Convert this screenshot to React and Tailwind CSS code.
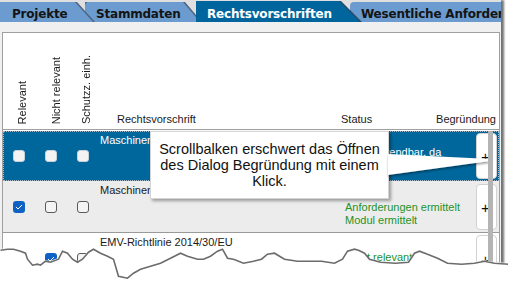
import React from "react";

function Cb({ checked, sel }) {
  if (checked)
    return (
      <div className="flex h-[12px] w-[12px] items-center justify-center rounded-[3px] bg-[#0f62c4]">
        <svg width="8" height="6" viewBox="0 0 8 6">
          <path d="M1 3 L3 5 L7 1" fill="none" stroke="white" strokeWidth="1" />
        </svg>
      </div>
    );
  if (sel)
    return <div className="h-[12px] w-[12px] rounded-[3px] border border-[#c9d2da] bg-[#f3f3f3]" />;
  return <div className="h-[12px] w-[12px] rounded-[3px] border border-[#5a5a5a] bg-[#f4f4f4]" />;
}

function CbCol({ checked, sel }) {
  return (
    <div className="flex w-[32px] shrink-0 items-center pl-[10px]">
      <Cb checked={checked} sel={sel} />
    </div>
  );
}

function PlusBtn({ mt }) {
  return (
    <div
      className={
        "mb-[2px] flex w-[21px] shrink-0 items-center justify-center rounded-[4px] border border-[#d2d2d2] bg-white pr-[2px] text-[15px] text-[#111] " +
        mt
      }
    >
      +
    </div>
  );
}

const tornPts =
  "0,249 7,248 13,248 20,250 25,252 27,258 32,264 37,263 40,264 45,260 50,261 58,258 62,250 67,252 72,258 77,261 82,258 88,251 93,248 100,252 107,255 113,258 118,275 127,277 133,272 140,268 150,265 160,262 170,257 180,252 187,255 197,258 203,258 210,255 217,250 222,248 227,257 233,258 243,262 253,260 261,258 267,253 274,252 284,258 297,260 321,260 334,262 342,258 347,250 354,248 358,249 364,252 369,258 380,261 395,262 408,261 414,252 419,250 427,253 437,257 447,262 461,263 474,262 484,260 494,262 508,263";

export default function App() {
  return (
    <div className="relative h-[291px] w-[508px] overflow-hidden bg-white font-['Liberation_Sans',Arial,sans-serif] text-[11px] text-[#1a1a1a]">
      <div className="relative h-[291px] w-[501px] bg-[#f0f0f0] shadow-[3px_0_2px_rgba(0,0,0,0.55)]">
        {/* Tabs */}
        <div className="flex h-[22px] bg-[#dfdfdf] pt-[2px] font-['DejaVu_Sans',Verdana,sans-serif] text-[12px] font-bold tracking-[-0.2px] whitespace-nowrap">
          <div className="relative z-30 h-[20px] w-[95px] shrink-0 bg-[#4d6580] [clip-path:polygon(0_0,77px_0,95px_100%,0_100%)]">
            <div className="h-[20px] bg-[#6b9bcf] pl-[12px] leading-[24px] text-[#141414] [clip-path:polygon(0_0,75px_0,93px_100%,0_100%)]">
              Projekte
            </div>
          </div>
          <div className="relative z-20 ml-[-10px] h-[20px] w-[117px] shrink-0 bg-[#4d6580] [clip-path:polygon(0_0,100px_0,117px_100%,0_100%)]">
            <div className="h-[20px] rounded-tl-[4px] bg-[#6b9bcf] pl-[11px] leading-[24px] text-[#141414] [clip-path:polygon(0_0,98px_0,115px_100%,0_100%)]">
              Stammdaten
            </div>
          </div>
          <div className="relative z-40 ml-[-6px] mt-[-1px] h-[21px] w-[166px] shrink-0 bg-[#2d4a66] [clip-path:polygon(0_0,145px_0,166px_100%,0_100%)]">
            <div className="h-[21px] bg-[#00659d] pl-[11px] leading-[26px] text-white [clip-path:polygon(0_0,143px_0,164px_100%,0_100%)]">
              Rechtsvorschriften
            </div>
          </div>
          <div className="relative z-10 ml-[-12px] h-[20px] min-w-0 flex-1 overflow-hidden rounded-tl-[4px] bg-[#6b9bcf] pl-[11px] leading-[24px] text-[#141414]">
            Wesentliche Anforder
          </div>
        </div>
        <div className="h-[10px] bg-[#f0f0f0]" />

        {/* Panel */}
        <div className="ml-[2px] mr-[1px] h-[259px] border-l border-r border-t border-[#a0a0a0] bg-white">
          {/* Header */}
          <div className="flex h-[97px] items-end border-b border-[#a0a0a0] leading-[13px]">
            <div className="w-[32px] shrink-0 pb-[5px] pl-[13px]">
              <div className="rotate-180 whitespace-nowrap leading-[13px] [writing-mode:vertical-rl]">Relevant</div>
            </div>
            <div className="w-[32px] shrink-0 pb-[5px] pl-[15px]">
              <div className="rotate-180 whitespace-nowrap leading-[13px] [writing-mode:vertical-rl]">Nicht relevant</div>
            </div>
            <div className="w-[32px] shrink-0 pb-[5px] pl-[13px]">
              <div className="rotate-180 whitespace-nowrap leading-[13px] [writing-mode:vertical-rl]">Schutzz. einh.</div>
            </div>
            <div className="w-[242px] shrink-0 pb-[3px] pl-[18px]">Rechtsvorschrift</div>
            <div className="flex flex-1 justify-between pb-[3px] pr-[3px]">
              <span>Status</span>
              <span>Begründung</span>
            </div>
          </div>

          {/* Row 1 selected */}
          <div className="mt-[1px] flex h-[50px] bg-[#00679c] leading-[13px] text-white outline-1 -outline-offset-1 outline-dotted outline-[#a9bccc]">
            <CbCol sel />
            <CbCol sel />
            <CbCol sel />
            <div className="w-[242px] shrink-0 overflow-hidden whitespace-nowrap pl-[1px] pt-[3px]">
              Maschinenrichtlinie 2006/42/EG
            </div>
            <div className="flex-1 overflow-hidden whitespace-nowrap pt-[15px]">Nicht anwendbar, da</div>
            <PlusBtn mt="mt-[2px]" />
            <div className="w-[2px] shrink-0" />
          </div>

          {/* Row 2 */}
          <div className="flex h-[52px] border-b border-[#9a9a9a] bg-[#ececec] leading-[13px]">
            <CbCol checked />
            <CbCol />
            <CbCol />
            <div className="w-[242px] shrink-0 overflow-hidden whitespace-nowrap pl-[1px] pt-[3px]">
              Maschinenrichtlinie 2006/42/EG
            </div>
            <div className="flex-1 overflow-hidden whitespace-nowrap pl-[4px] pt-[20px] text-[#24922a]">
              <div>Anforderungen ermittelt</div>
              <div>Modul ermittelt</div>
            </div>
            <PlusBtn mt="mt-[3px]" />
            <div className="w-[2px] shrink-0" />
          </div>

          {/* Row 3 */}
          <div className="flex h-[52px] bg-white leading-[13px]">
            <CbCol />
            <CbCol checked />
            <CbCol />
            <div className="w-[242px] shrink-0 overflow-hidden whitespace-nowrap pl-[1px] pt-[3px]">
              EMV-Richtlinie 2014/30/EU
            </div>
            <div className="flex-1 overflow-hidden whitespace-nowrap pl-[4px] pt-[18px] text-[#24922a]">Nicht relevant</div>
            <PlusBtn mt="mt-[2px]" />
            <div className="w-[2px] shrink-0" />
          </div>
        </div>
      </div>

      {/* Callout */}
      <div className="absolute left-[150px] top-[131px] h-[68px] w-[239px] border border-[#d4d4d4] bg-white pt-[9px] text-center text-[14.5px] leading-[16px] text-[#111] shadow-[2px_2px_3px_rgba(0,0,0,0.35)]">
        Scrollbalken erschwert das Öffnen
        <br />
        des Dialog Begründung mit einem
        <br />
        Klick.
      </div>
      <svg className="absolute left-0 top-0" width="508" height="291" viewBox="0 0 508 291">
        <defs>
          <filter id="ws" x="-10%" y="-50%" width="120%" height="200%">
            <feDropShadow dx="0.5" dy="1.5" stdDeviation="0.9" floodColor="#000" floodOpacity="0.45" />
          </filter>
        </defs>
        <polygon points="388,154 490,159 490,161 388,175" fill="white" filter="url(#ws)" />
      </svg>

      {/* Scrollbar */}
      <div className="absolute left-[488px] top-[131px] h-[160px] w-[5px] bg-[#b4b4b4]" />

      {/* Torn edge */}
      <svg className="absolute left-0 top-0" width="508" height="291" viewBox="0 0 508 291">
        <defs>
          <filter id="tb" x="-5%" y="-50%" width="110%" height="200%">
            <feGaussianBlur stdDeviation="0.7" />
          </filter>
        </defs>
        <polygon points={tornPts + " 508,291 0,291"} fill="white" />
        <polyline
          points={tornPts}
          fill="none"
          stroke="#3a3a3a"
          strokeWidth="1.6"
          opacity="0.75"
          filter="url(#tb)"
          transform="translate(0.5 1.2)"
        />
      </svg>
    </div>
  );
}
